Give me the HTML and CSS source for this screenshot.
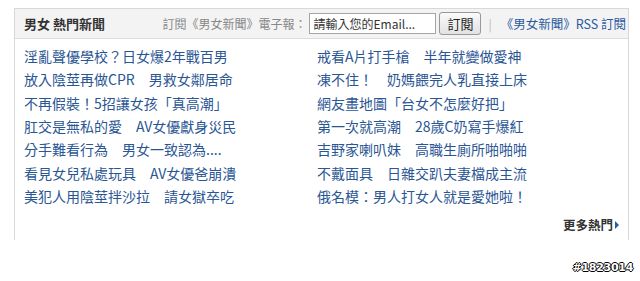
FILE: index.html
```html
<!DOCTYPE html>
<html lang="zh-Hant">
<head>
  <meta charset="UTF-8">
  <title>男女 熱門新聞</title>
  <link rel="stylesheet" href="styles.css">
</head>
<body>
  <div class="hot-box">
    <div class="hot-head">
      <h2>男女 熱門新聞</h2>
      <form class="subscribe">
        <span class="sub-label">訂閱《男女新聞》電子報：</span>
        <input type="text" value="請輸入您的Email...">
        <button type="button">訂閱</button>
        <span class="sep">|</span>
        <a href="#" class="rss">《男女新聞》RSS 訂閱</a>
      </form>
    </div>

    <ul class="hot-list">
      <li><a href="#">淫亂聲優學校？日女爆2年戰百男</a></li>
      <li><a href="#">戒看A片打手槍　半年就變做愛神</a></li>
      <li><a href="#">放入陰莖再做CPR　男救女鄰居命</a></li>
      <li><a href="#">凍不住！　奶媽餵完人乳直接上床</a></li>
      <li><a href="#">不再假裝！5招讓女孩「真高潮」</a></li>
      <li><a href="#">網友畫地圖「台女不怎麼好把」</a></li>
      <li><a href="#">肛交是無私的愛　AV女優獻身災民</a></li>
      <li><a href="#">第一次就高潮　28歲C奶寫手爆紅</a></li>
      <li><a href="#">分手難看行為　男女一致認為....</a></li>
      <li><a href="#">吉野家喇叭妹　高職生廁所啪啪啪</a></li>
      <li><a href="#">看見女兒私處玩具　AV女優爸崩潰</a></li>
      <li><a href="#">不戴面具　日雜交趴夫妻檔成主流</a></li>
      <li><a href="#">美犯人用陰莖拌沙拉　請女獄卒吃</a></li>
      <li><a href="#">俄名模：男人打女人就是愛她啦！</a></li>
    </ul>

    <div class="more"><a href="#">更多熱門</a><span class="arrow"></span></div>
  </div>

  <div class="stamp">#1823014</div>
</body>
</html>
```

FILE: styles.css
```css
body {
  margin: 0;
  font-family: "Noto Sans CJK TC", "Liberation Sans", sans-serif;
  background: #fff;
  position: relative;
  height: 281px;
}
.hot-box {
  margin: 8px 11px 0 14px;
  height: 232px;
  border: 1px solid #d8d8d8;
  border-bottom: none;
  box-sizing: border-box;
}
.hot-head {
  height: 30px;
  background: #f3f3f3;
  border-bottom: 1px solid #dcdcdc;
  display: flex;
  align-items: center;
  justify-content: space-between;
  padding: 0 2px 0 9px;
  box-sizing: border-box;
}
.hot-head h2 {
  margin: 0;
  font-size: 13px;
  font-weight: bold;
  color: #333;
}
.subscribe {
  display: flex;
  align-items: center;
  font-size: 12px;
}
.sub-label {
  color: #888;
  margin-right: 3px;
}
.subscribe input {
  width: 127px;
  height: 21px;
  box-sizing: border-box;
  border: 1px solid #a5a5a5;
  font-family: inherit;
  font-size: 12px;
  color: #333;
  padding: 0 3px;
}
.subscribe button {
  margin-left: 3px;
  width: 42px;
  height: 23px;
  border: 1px solid #999;
  border-radius: 3px;
  background: linear-gradient(#fafafa, #e2e2e2);
  font-family: inherit;
  font-size: 13px;
  color: #222;
  padding: 0;
}
.sep {
  color: #bbb;
  margin: 0 9px 0 7px;
}
.rss {
  color: #2a5aa0;
  text-decoration: none;
  font-size: 12.5px;
}
.hot-list {
  list-style: none;
  margin: 0;
  padding: 6px 0 0 9px;
  display: grid;
  grid-template-columns: 293px 1fr;
}
.hot-list li {
  line-height: 23.33px;
  font-size: 14px;
  white-space: nowrap;
}
.hot-list a {
  color: #2a5694;
  text-decoration: none;
}
.more {
  display: flex;
  justify-content: flex-end;
  align-items: center;
  padding: 7px 9px 0 0;
  font-size: 12.5px;
}
.more a {
  color: #333;
  text-decoration: none;
  font-weight: bold;
}
.arrow {
  margin-left: 2px;
  width: 0;
  height: 0;
  border-left: 4px solid #2a5aa0;
  border-top: 4px solid transparent;
  border-bottom: 4px solid transparent;
}
.stamp {
  position: absolute;
  right: 7px;
  top: 261px;
  font-family: "DejaVu Sans", sans-serif;
  font-size: 11px;
  font-weight: bold;
  color: #fff;
  text-shadow: -1px 0 #000, 1px 0 #000, 0 -1px #000, 0 1px #000;
  letter-spacing: -0.3px;
}
```
